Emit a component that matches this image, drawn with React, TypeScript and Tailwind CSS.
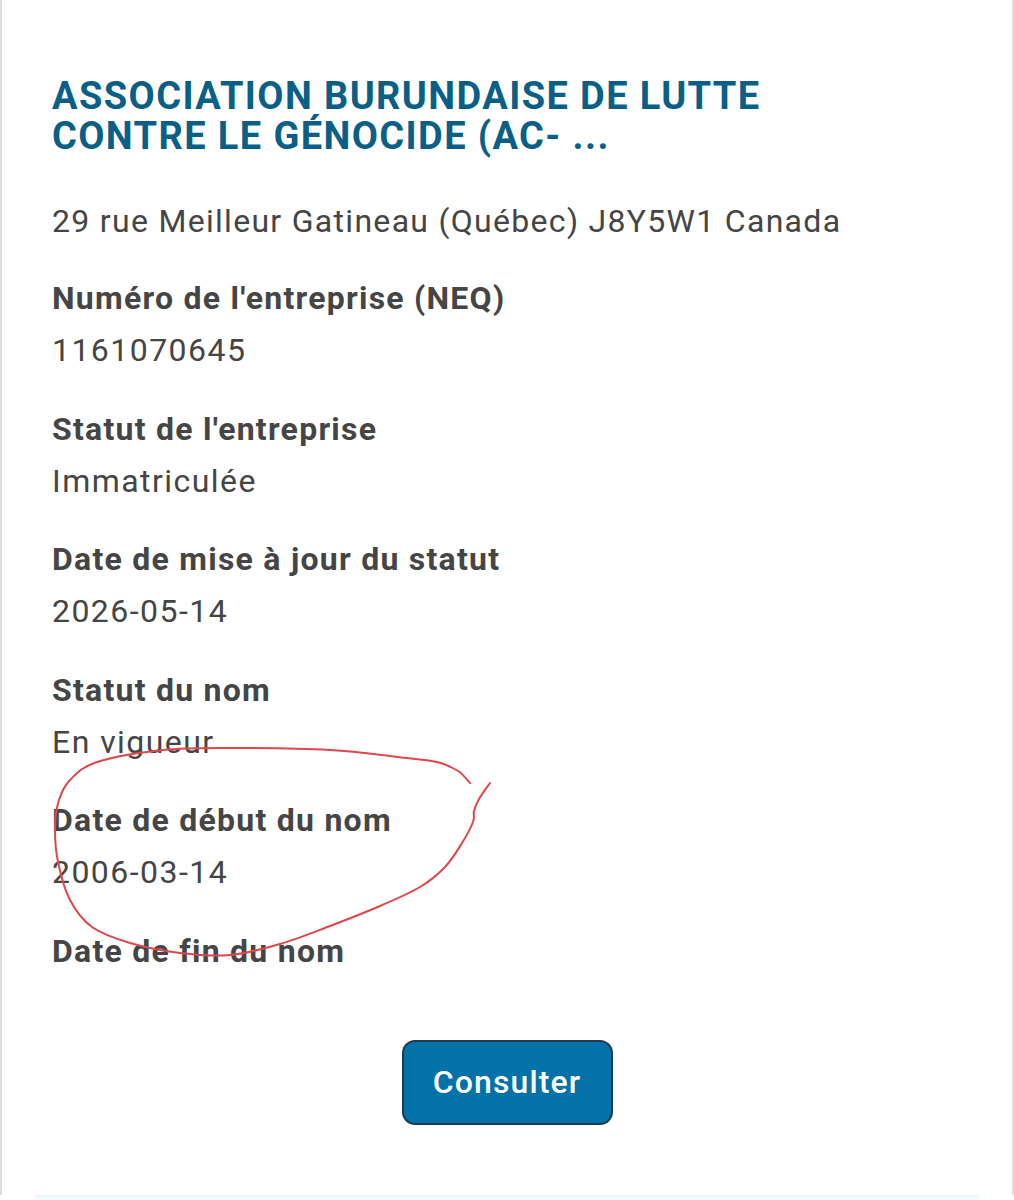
const fields: { label: string; value?: string }[] = [
  { label: "Numéro de l'entreprise (NEQ)", value: "1161070645" },
  { label: "Statut de l'entreprise", value: "Immatriculée" },
  { label: "Date de mise à jour du statut", value: "2026-05-14" },
  { label: "Statut du nom", value: "En vigueur" },
  { label: "Date de début du nom", value: "2006-03-14" },
  { label: "Date de fin du nom" },
];

// hand-drawn red loop around "Date de début du nom"
const loop: [number, number][] = [
  [490, 783], [479, 799], [474, 811], [473, 822], [462, 843], [445, 867],
  [420, 887], [380, 906], [330, 926], [280, 944], [230, 955], [180, 953],
  [130, 943], [92, 927], [70, 900], [58, 862], [55, 827], [59, 800],
  [70, 780], [97, 762], [163, 750], [230, 748], [330, 750], [397, 757],
  [437, 762], [458, 771], [470, 783],
];

function smoothPath(pts: [number, number][]) {
  let d = `M${pts[0][0]} ${pts[0][1]}`;
  for (let i = 0; i < pts.length - 1; i++) {
    const p0 = pts[i - 1] || pts[i];
    const p1 = pts[i];
    const p2 = pts[i + 1];
    const p3 = pts[i + 2] || p2;
    const c1x = p1[0] + (p2[0] - p0[0]) / 6;
    const c1y = p1[1] + (p2[1] - p0[1]) / 6;
    const c2x = p2[0] - (p3[0] - p1[0]) / 6;
    const c2y = p2[1] - (p3[1] - p1[1]) / 6;
    d += ` C${c1x} ${c1y} ${c2x} ${c2y} ${p2[0]} ${p2[1]}`;
  }
  return d;
}

export default function App() {
  return (
    <div className="relative min-h-[1200px] w-[1014px] overflow-hidden bg-white font-['Roboto',sans-serif]">
      <div className="flex min-h-[1195px] flex-col border-x-2 border-[#dedede] pl-[50px] pr-6">
        <h1 className="mt-[76px] text-[38px] font-bold leading-[40px] tracking-[1.4px] text-[#0a5f87]">
          ASSOCIATION BURUNDAISE DE LUTTE
          <br />
          CONTRE LE GÉNOCIDE (AC- ...
        </h1>
        <p className="mt-[39px] text-[32px] leading-[52px] tracking-[1.3px] text-[#454545]">
          29 rue Meilleur Gatineau (Québec) J8Y5W1 Canada
        </p>
        <dl className="mt-[25px] flex flex-col gap-[26.5px] text-[32px] leading-[52px] tracking-[1.25px] text-[#454545]">
          {fields.map((f) => (
            <div key={f.label}>
              <dt className="font-bold">{f.label}</dt>
              {f.value ? <dd className="tracking-[1.45px]">{f.value}</dd> : null}
            </div>
          ))}
        </dl>
        <div className="mt-[63px] flex justify-center">
          <button
            type="button"
            className="ml-[-26px] h-[85px] w-[211px] rounded-[13px] border-2 border-[#1d3b52] bg-[#0272a8] text-[32px] font-medium tracking-[1.1px] text-white"
          >
            Consulter
          </button>
        </div>
      </div>
      <div className="mx-[35px] h-[5px] border-t border-[#e6f7f8] bg-[#effbfc]" />
      <svg
        className="pointer-events-none absolute left-0 top-0"
        width="1014"
        height="1200"
        viewBox="0 0 1014 1200"
      >
        <path
          d={smoothPath(loop)}
          fill="none"
          stroke="#e0474c"
          strokeWidth="2"
          strokeLinecap="round"
          strokeLinejoin="round"
        />
      </svg>
    </div>
  );
}
